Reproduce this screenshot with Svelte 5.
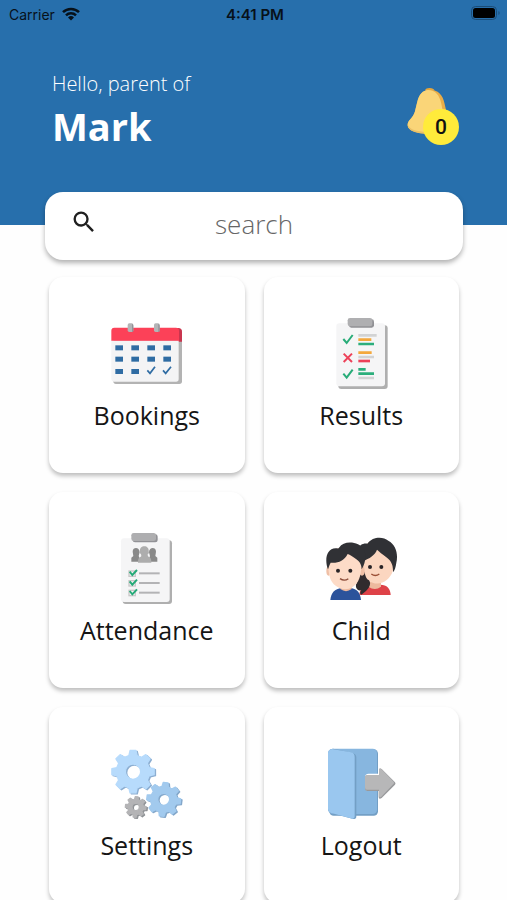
<script>
  const tiles = ['Bookings', 'Results', 'Attendance', 'Child', 'Settings', 'Logout']

  const VIEWS = {
    Bookings: '45 24 219 219',
    Results: '15 24 219 219',
    Attendance: '18 24 219 219',
    Child: '30 9 219 219',
    Settings: '30 24 219 219',
    Logout: '30 24 219 219',
  }

  let notifications = $state(0)
  let query = $state('')

  // outline of an eight-toothed gear with a round hole in the middle
  function gear(cx, cy, outer, inner, hole, turn = 0) {
    const points = []
    for (let i = 0; i < 8; i++) {
      const mid = (i * Math.PI) / 4 + turn
      for (const [r, a] of [[inner, -0.25], [outer, -0.14], [outer, 0.14], [inner, 0.25]]) {
        points.push(`${(cx + r * Math.cos(mid + a)).toFixed(1)} ${(cy + r * Math.sin(mid + a)).toFixed(1)}`)
      }
    }
    return `M${points.join('L')}Z M${cx - hole} ${cy}a${hole} ${hole} 0 1 0 ${hole * 2} 0a${hole} ${hole} 0 1 0 ${-hole * 2} 0Z`
  }

  const bigGear = gear(99, 95, 64, 50, 23)
  const midGear = gear(191, 178, 51, 39, 18, 0.12)
  const smallGear = gear(107, 201, 31, 23, 11, 0.1)
</script>

<div class="screen">
  <header class="top">
    <div class="status">
      <span class="carrier">
        Carrier
        <svg class="wifi" viewBox="0 0 18 14" aria-hidden="true">
          <g fill="none" stroke="#07111a" stroke-width="2.5">
            <path d="M1 5.2a11.3 11.3 0 0 1 16 0" />
            <path d="M4 8.4a7.1 7.1 0 0 1 10 0" />
          </g>
          <path d="M9 13.6 6 10.5a4.3 4.3 0 0 1 6 0z" fill="#07111a" />
        </svg>
      </span>
      <span class="time">4:41 PM</span>
      <span class="power">
        <svg class="battery" viewBox="0 0 30 14" aria-hidden="true">
          <rect x="0.5" y="0.5" width="25" height="13" rx="4" fill="none" stroke="#1b4d78" />
          <rect x="2" y="2" width="22" height="10" rx="2.5" fill="#000" />
          <path d="M27.5 5a2.4 2.4 0 0 1 0 4z" fill="#1b4d78" />
        </svg>
      </span>
    </div>
    <div class="greeting">
      <div>
        <p class="hello">Hello, parent of</p>
        <h1 class="name">Mark</h1>
      </div>
      <button class="bell" aria-label="Notifications">
        <svg viewBox="36 36 156 176" aria-hidden="true">
          <path d="M90 46q2-7 14-7t15 8z" fill="#e8a63a" />
          <path d="M66 82C72 57 84 45 103 44c27 0 41 16 46 42l8 35c4 18 15 20 13 35-3 19-35 22-66 22-38 0-66-9-67-25-1-17 16-21 22-42z" fill="#e9ad48" />
          <path d="M66 82C72 57 83 46 99 45c22 0 35 16 40 41l8 38c3 15 7 19 3 31-6 17-25 22-49 22-37-1-63-10-64-24-1-17 16-21 22-42z" fill="#fad578" />
          <path d="M38 151c5 13 25 20 57 21 20 0 39-3 50-9-8 11-23 15-44 15-39 0-65-11-63-27z" fill="#e9c068" />
        </svg>
        <span class="badge">{notifications}</span>
      </button>
    </div>
  </header>

  <label class="search">
    <svg viewBox="0 0 24 24" aria-hidden="true">
      <path d="M15.5 14h-.79l-.28-.27A6.47 6.47 0 0 0 16 9.5 6.5 6.5 0 1 0 9.5 16c1.61 0 3.09-.59 4.23-1.57l.27.28v.79l5 4.99L20.49 19l-4.99-5zm-6 0a4.5 4.5 0 1 1 0-9 4.5 4.5 0 0 1 0 9z" fill="#202020" />
    </svg>
    <input type="text" placeholder="search" aria-label="search" bind:value={query} />
  </label>

  <nav class="tiles">
    {#each tiles as name (name)}
      <button class="tile">
        <svg viewBox={VIEWS[name]} aria-hidden="true">
          {#if name === 'Bookings'}
            <rect x="55" y="58" width="206" height="164" rx="8" fill="#b3b3b3" />
            <path d="M56 54h194q11 0 11 11v30H56z" fill="#c9354e" />
            <path d="M49 91h202v116q0 8-8 8H58q-9 0-9-9z" fill="#f4f4f5" />
            <path d="M49 62q0-9 9-9h185q9 0 9 9v30H49z" fill="#fc4158" />
            {#each [98, 177] as x (x)}
              <rect {x} y="40" width="17" height="26" rx="5" fill="#b4b4b6" />
              <path d="M{x + 13} 42q4 1 4 5v15q0 4-4 4z" fill="#929297" />
            {/each}
            <g fill="#2f6ca3">
              {#each [106, 140, 177] as y, row (y)}
                {#each [61, 109, 157, 205] as x, col (x)}
                  {#if row < 2 || col < 2}
                    <rect {x} {y} width="23" height="15" />
                  {/if}
                {/each}
              {/each}
            </g>
            <path d="m157 181 8 9 15-20M204 181l8 9 16-20" fill="none" stroke="#2f6ca3" stroke-width="5" />
          {:else if name === 'Results'}
            <rect x="55" y="46" width="148" height="191" rx="9" fill="#afafaf" />
            <rect x="49" y="40" width="146" height="189" rx="9" fill="#f5f5f6" />
            <rect x="87" y="28" width="75" height="25" rx="7" fill="#919195" />
            <rect x="83" y="24" width="74" height="25" rx="7" fill="#afafb1" />
            <g fill="none" stroke="#28ac78" stroke-width="6">
              <path d="m70 87 10 12 18-24M70 191l10 12 18-24" />
              <path d="m71 131 25 25m0-25-25 25" stroke="#ed4159" />
            </g>
            <g fill="none" stroke-width="8">
              <path d="M115 76h55M115 141h47M115 204h47" stroke="#d2d3d4" />
              <path d="M115 89h39M115 128h40" stroke="#f4a83d" />
              <path d="M115 102h47M115 178h22M115 191h47" stroke="#2cae7c" />
              <path d="M115 153h35" stroke="#ed4159" />
            </g>
          {:else if name === 'Attendance'}
            <rect x="56" y="46" width="148" height="191" rx="9" fill="#afafaf" />
            <rect x="51" y="40" width="146" height="191" rx="9" fill="#f5f5f6" />
            <rect x="86" y="28" width="75" height="24" rx="7" fill="#929296" />
            <rect x="82" y="24" width="74" height="24" rx="7" fill="#aeaeb0" />
            <g fill="#898989">
              <path d="M86 80c0-8 5-11 10-11s11 4 11 13l-3 11 7 17H82V98l6-5z" />
              <path d="M156 80c0-8-5-11-10-11s-11 4-11 13l3 11-7 17h29V98l-6-5z" />
            </g>
            <path d="M108 79c-1-10 5-15 13-15s14 6 13 15c2 4 0 8-3 9 0 7 2 7 5 9 5 2 6 7 6 16h-40c0-10 1-14 7-17 4-1 3-4 2-8-3-2-4-6-3-9z" fill="#adadad" />
            {#each [144, 173, 202] as y (y)}
              <rect x="75" y={y - 6} width="19" height="16" fill="none" stroke="#c8c8c8" stroke-width="4" />
              <path d="m77 {y - 4} 8 10 14-15" fill="none" stroke="#25aa78" stroke-width="6" />
              <path d="M105 {y + 1}h62" stroke="#b3b3b5" stroke-width="6" />
            {/each}
          {:else if name === 'Child'}
            <path d="M133 195c1-20 12-31 33-31h30c20 0 30 12 31 31z" fill="#de4248" />
            <path d="M160 155h38v15q-18 14-38 0z" fill="#edb99e" />
            <path d="M139 85c0-35 20-56 52-56 31 0 50 22 49 52 0 32-8 56-25 69-14 13-38 14-54 2-16-12-22-36-22-67z" fill="#fbd6c0" />
            <path d="M134 60c-8-9 7-22 23-19 17-22 47-21 63-9 23 12 30 41 24 66-2 14-5 24-10 29 1-25-7-36-21-46-10-8-21-16-27-22-6 16-22 27-43 34z" fill="#303135" />
            <circle cx="165" cy="111" r="6" fill="#282326" />
            <circle cx="199" cy="111" r="6" fill="#282326" />
            <path d="M169 132q12 9 24 0" fill="none" stroke="#9b5036" stroke-width="4" />
            <path d="M139 118c14 3 8 26 23 33 9 12-1 29-23 43-5-2-4-8 0-13-8 2-18-5-16-17z" fill="#302b2e" />
            <path d="M46 210c2-21 13-34 34-36h27c19 2 29 15 31 36z" fill="#2c539b" />
            <path d="M76 165h34v12q-17 13-34 0z" fill="#edb99e" />
            <ellipse cx="41" cy="123" rx="7" ry="14" fill="#efbfa6" />
            <ellipse cx="141" cy="123" rx="8" ry="14" fill="#efbfa6" />
            <path d="M40 99c0-28 15-45 43-47 34-3 56 14 56 48 0 37-7 60-26 71-16 10-36 8-50-3-19-14-23-35-23-69z" fill="#fddbc7" />
            <path d="M39 118C28 91 34 54 63 55c7 0 7 1 9-2 17-25 61-17 75 5 8 20 4 42-7 60-1-14-5-22-16-30-10-7-19-14-26-16-11 21-29 28-51 26-5 9-5 13-8 20z" fill="#303135" />
            <circle cx="69" cy="122" r="6" fill="#282326" />
            <circle cx="106" cy="122" r="6" fill="#282326" />
            <path d="M75 146q13 9 25 0" fill="none" stroke="#8c4c39" stroke-width="4" />
          {:else if name === 'Settings'}
            <g fill-rule="evenodd" stroke-width="4" stroke-linejoin="round">
              <g transform="translate(4 3)">
                <path d={bigGear} fill="#8caed1" stroke="#8caed1" />
                <path d={midGear} fill="#83a7ca" stroke="#83a7ca" />
                <path d={smallGear} fill="#8f9296" stroke="#8f9296" />
              </g>
              <path d={bigGear} fill="#b7dbfc" stroke="#b7dbfc" />
              <path d={midGear} fill="#a2caee" stroke="#a2caee" />
              <path d={smallGear} fill="#b4b4b6" stroke="#b4b4b6" />
            </g>
          {:else}
            <rect x="43" y="28" width="146" height="199" rx="13" fill="#739fc5" />
            <rect x="41" y="26" width="145" height="196" rx="13" fill="#87b6df" />
            <path d="M54 26l57 12q13 3 13 14v177q0 11-12 7l-62-16q-11-3-11-13V40q0-12 15-14z" fill="#739fc5" />
            <path d="M51 27l57 10q11 2 11 14v176q0 12-12 8l-58-16q-10-3-10-13V40q0-12 12-13z" fill="#9ac7ef" />
            <path d="M190 101h-29q-11 0-11 11v30q0 11 11 11h29z" fill="#fefefe" />
            <path d="M157 106h36V91q0-8 7-4l40 40q3 4 0 7l-40 40q-9 6-9-4v-17h-34q-7 0-7-8v-31q0-8 7-8z" fill="#98999b" />
            <path d="M156 105h36V89q0-8 7-2l37 38q3 3 0 6l-37 39q-7 6-7-3v-18h-36q-6 0-6-6v-32q0-6 6-6z" fill="#b7b7b8" />
          {/if}
        </svg>
        <span>{name}</span>
      </button>
    {/each}
  </nav>
</div>

<style>
  :global(body) {
    margin: 0;
    background: #fefefe;
  }

  .screen {
    height: 100vh;
    overflow-y: auto;
    scrollbar-width: none;
    font-family: 'Open Sans', 'Noto Sans', sans-serif;
    color: #151515;
  }

  .top {
    box-sizing: border-box;
    min-height: 225px;
    background: #276fac;
  }

  .status {
    display: grid;
    grid-template-columns: 1fr auto 1fr;
    align-items: center;
    height: 28px;
    padding: 0 6px 0 9px;
    font-family: Inter, sans-serif;
    font-size: 14px;
    color: #07111a;
  }

  .carrier {
    display: flex;
    align-items: center;
    gap: 7px;
  }

  .wifi {
    width: 18px;
    height: 14px;
  }

  .time {
    font-size: 15px;
    font-weight: 600;
  }

  .power {
    display: flex;
    justify-content: flex-end;
    margin-top: -2px;
  }

  .battery {
    width: 30px;
    height: 14px;
  }

  .greeting {
    display: flex;
    justify-content: space-between;
    align-items: flex-end;
    padding: 43px 48px 0 52px;
    color: #fff;
  }

  .hello {
    margin: 0;
    font-size: 20px;
    font-weight: 300;
    line-height: 26px;
  }

  .name {
    margin: 0;
    font-size: 38px;
    font-weight: 700;
    line-height: 58px;
  }

  .bell {
    position: relative;
    width: 52px;
    height: 58px;
    margin-bottom: 10px;
    padding: 0;
    border: 0;
    background: none;
    cursor: pointer;
  }

  .bell svg {
    display: block;
    width: 52px;
    height: 58px;
  }

  .badge {
    position: absolute;
    right: 0;
    bottom: 0;
    width: 36px;
    height: 36px;
    border-radius: 50%;
    background: #ffeb3b;
    color: #111;
    font-family: Roboto, sans-serif;
    font-size: 21px;
    font-weight: 500;
    line-height: 36px;
    text-align: center;
  }

  .search {
    position: relative;
    display: grid;
    grid-template-columns: 28px 1fr 28px;
    align-items: center;
    height: 68px;
    margin: -33px 44px 17px 45px;
    padding: 0 25px;
    box-sizing: border-box;
    border-radius: 18px;
    background: #fff;
    box-shadow: 0 3px 5px rgba(0, 0, 0, 0.3);
  }

  .search svg {
    width: 28px;
    height: 28px;
    margin-bottom: 8px;
  }

  .search input {
    min-width: 0;
    padding: 0 0 4px;
    border: 0;
    outline: 0;
    background: none;
    font-family: inherit;
    font-size: 26px;
    font-weight: 300;
    text-align: center;
    color: #333;
  }

  .search input::placeholder {
    color: #666;
    opacity: 1;
  }

  .tiles {
    display: grid;
    grid-template-columns: 1fr 1fr;
    gap: 19px;
    padding: 0 48px 19px 49px;
  }

  .tile {
    display: flex;
    flex-direction: column;
    align-items: center;
    gap: 7px;
    height: 196px;
    padding: 41px 0 0;
    border: 0;
    border-radius: 14px;
    background: #fff;
    box-shadow: 0 3px 4px rgba(0, 0, 0, 0.25);
    color: inherit;
    font-family: inherit;
    font-size: 25px;
    line-height: 34px;
    cursor: pointer;
  }

  .tile svg {
    width: 73px;
    height: 73px;
  }
</style>
